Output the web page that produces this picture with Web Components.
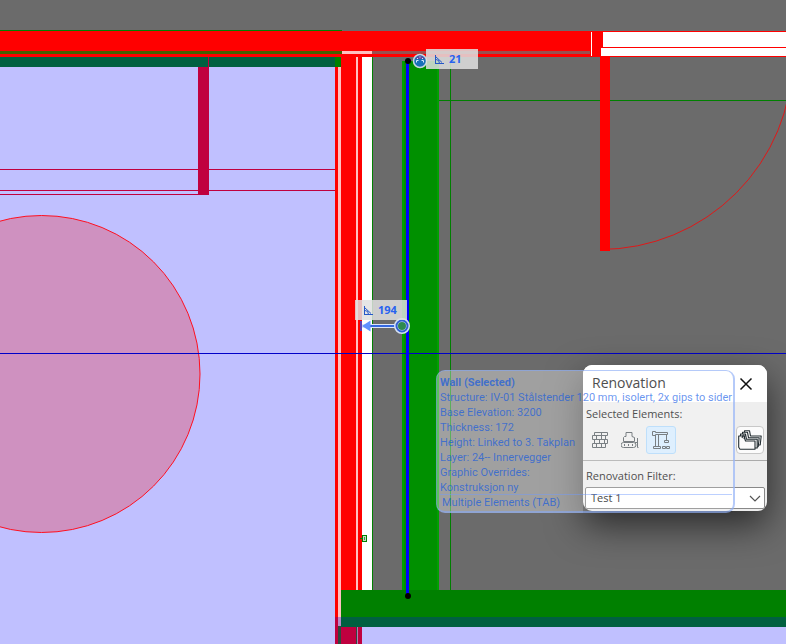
<!DOCTYPE html>
<html lang="en"><head><meta charset="utf-8"><title>Floor plan – Renovation</title>
<style>
html,body{margin:0;height:100%;overflow:hidden}
body{font-family:"Open Sans","Noto Sans",sans-serif;background:#6b6b6b}
</style></head><body>
<plan-workspace>
  <floor-plan slot="plan"></floor-plan>
  <dimension-tag style="left:426px;top:49px">21</dimension-tag>
  <dimension-tag style="left:355px;top:300px">194</dimension-tag>
  <renovation-palette style="left:583px;top:365px"></renovation-palette>
  <element-info style="left:436px;top:370px">
    <b slot="title">Wall (Selected)</b>
    <span>Structure: IV-01 Stålstender 120 mm, isolert, 2x gips to sider</span>
    <span>Base Elevation: 3200</span>
    <span>Thickness: 172</span>
    <span>Height: Linked to 3. Takplan</span>
    <span>Layer: 24-- Innervegger</span>
    <span>Graphic Overrides:</span>
    <span>Konstruksjon ny</span>
    <span slot="footer">Multiple Elements (TAB)</span>
  </element-info>
</plan-workspace>
<script>
const define = (name, html) => customElements.define(name, class extends HTMLElement {
  constructor() { super(); this.attachShadow({mode: 'open'}).innerHTML = html; }
});

define('plan-workspace', `<style>
:host{display:block;position:relative;width:100%;height:100vh;overflow:hidden}
</style><slot name="plan"></slot><slot></slot>`);

define('floor-plan', `<style>
:host{display:block;height:100%}
svg{display:block;width:100%;height:100%}
</style>
<svg viewBox="0 0 786 644" preserveAspectRatio="xMinYMin slice" role="img" aria-label="Floor plan" shape-rendering="crispEdges">
<rect width="786" height="644" fill="#6b6b6b"/>
<!-- rooms -->
<rect y="67" width="341" height="577" fill="#c0c0ff"/>
<rect x="361" y="626" width="425" height="18" fill="#c0c0ff"/>
<circle cx="41.500" cy="374" r="158.500" fill="#cf91c0" stroke="#ff1020" shape-rendering="auto"/>
<!-- furniture and partition -->
<path fill="#c0003f" d="M0 169h335v1H0zM0 190h335v1H0zM0 194h209v1H0zM198 67h11v127h-11z"/>
<!-- top wall -->
<path fill="#008000" d="M0 30h342v37H0z"/>
<path fill="#006040" d="M0 57h335v10H0z"/>
<path fill="#c0003f" d="M208 57h1v10h-1z"/>
<path fill="red" d="M0 31h786v26H0z"/>
<path fill="#446000" d="M0 51h342v3H0z"/>
<path fill="#ffc0c0" d="M342 51h30v3h-30z"/>
<path fill="#985050" d="M372 51h218v3H372z"/>
<path fill="#fff" d="M591 32h1v24h-1zM603 32h183v15H603zM601 48h185v8H601z"/>
<!-- left wall -->
<path fill="red" d="M335 67h3v577h-3zM341 57h21v533h-21z"/>
<path fill="#ffc0c0" d="M338 67h3v559h-3zM356 57h2v533h-2z"/>
<path fill="#fff" d="M362 54h10v536h-10z"/>
<path fill="red" d="M362 54h10v3h-10z"/>
<path fill="#008000" d="M372 57h1v533h-1zM450 57h1v533h-1zM439 100h347v1H439z"/>
<!-- selected wall -->
<path fill="#009000" d="M402 61h37v530h-37z"/>
<path fill="#00a000" d="M402 61h2v530h-2zM437 61h2v530h-2z"/>
<!-- bottom wall -->
<path fill="#008000" d="M341 590h445v27H341z"/>
<path fill="#006040" d="M341 617h445v10H341z"/>
<path fill="#c0003f" d="M335 617h3v27h-3zM341 627h15v17h-15zM358 627h4v17h-4z"/>
<path fill="#b888c8" d="M338 617h3v9h-3z"/>
<path fill="#304840" d="M338 626h3v18h-3zM356 627h1v17h-1z"/>
<path fill="#b080b0" d="M357 627h1v17h-1z"/>
<path stroke="#008000" fill="#c0e0c0" d="M362.500 535.500h4v6h-4zM360 538.500h2"/>
<path fill="#508050" d="M364 537h1v3h-1z"/>
<path d="M0 353h786v1H0z" fill="#0000c8"/>
<!-- door -->
<path fill="none" stroke="#e01818" d="M600 249.500A192.500 192.500 0 0 0 792.500 57" shape-rendering="auto"/>
<path fill="red" d="M600 57h10v194h-10zM601 56h185v1H601z"/>
<!-- selection line and snap marks -->
<path fill="#00f" d="M406 61h3v535h-3z"/>
<g shape-rendering="auto"><circle cx="408" cy="61" r="3"/><circle cx="408" cy="596" r="3"/>
<circle cx="420" cy="61" r="6.500" fill="#1870b8" stroke="#c8d8e0" stroke-width="1.500"/>
<path d="M415 59q5-7 10 0z" fill="#604da0"/><path d="M416.500 62.500v-2h2M423.500 62.500v-2h-2M417 58l1 1M423 58l-1 1M420 56.500v1" fill="none" stroke="#d8ecff"/>
<path d="M362 326h36" stroke="#dce6f8" stroke-width="4"/><path d="M368 326h29" stroke="#3468e0" stroke-width="2"/>
<path d="M370.500 320.500v11l-8.500-5.500z" fill="#5f92ff"/><path d="M360 321h2v10h-2z" fill="#6040b0"/>
<circle cx="402" cy="326" r="6" fill="#2f8a50" stroke="#d4e0f4" stroke-width="4"/><circle cx="402" cy="326" r="5.500" fill="none" stroke="#3060d0" stroke-width="2"/></g>
</svg>`);

define('dimension-tag', `<style>
:host{position:absolute;display:flex;align-items:center;gap:5px;box-sizing:border-box;height:20px;padding:0 8px;min-width:52px;background:#e1e1e1d9;color:#2862f0;font-size:11px;line-height:20px;font-weight:700}
svg{width:10px;height:10px}
</style><svg viewBox="0 0 10 10" fill="none" stroke="#2558c8" aria-hidden="true"><path d="M1.500 1v8.500M1 9.500h9M1.500 2.500l6.500 6M2 5.500q3.500 0 3.500 4"/></svg><slot></slot>`);

define('element-info', `<style>
:host{position:absolute;display:block;box-sizing:border-box;width:max-content;padding:4px 1px 1px 3px;border:1px solid #84a6f599;border-right-width:2px;border-bottom-width:2px;border-radius:9px;color:#0050e69c;font-family:Roboto,"Open Sans",sans-serif;font-size:11px;line-height:15px;background:linear-gradient(90deg,#ffffff5c 146px,#ffffff33 146px);white-space:nowrap}
::slotted(*){display:block}
footer{margin-top:-1px;padding:0 2px;border-top:1px solid #709aff77;line-height:15px}
</style><slot name="title"></slot><slot></slot><footer><slot name="footer"></slot></footer>`);

define('icon-button', `<style>
:host{display:block}
button{display:grid;place-items:center;width:28px;height:28px;padding:0;border:1px solid transparent;border-radius:3px;background:none;color:#586064}
:host([pressed]) button{background:#d6ecfe;border-color:#aed8fa;width:30px}
:host([framed]) button{background:#fbfbfb;border-color:#c8c8c8;border-radius:4px;color:#222c31}
:host([plain]) button{color:#111}
</style><button type="button"><slot></slot></button>`);

define('renovation-palette', `<style>
:host{position:absolute;display:block;width:184px;height:146px;border-radius:9px;overflow:hidden;background:#eee;color:#222;font-size:11px;line-height:16px;box-shadow:0 14px 36px #0009}
header{display:flex;justify-content:space-between;align-items:center;height:37px;padding:0 7px 0 9px;background:#fff}
h1{margin:0;font-size:14px;line-height:14px;font-weight:400;padding-bottom:2px}
.elements{padding:4px 3px 6px;border-bottom:1px solid #aaa}
.tools{display:flex;align-items:center;gap:2px;margin-top:4px}
.tools icon-button:last-child{margin-left:auto}
label{display:block;padding:7px 3px 3px}
.field{position:relative;display:flex;margin:0 2px}
select{appearance:none;width:100%;height:22px;padding:0 5px;border:1px solid #888;border-radius:2px;background:#fff;color:#111;font:inherit}
.field svg{position:absolute;right:4px;top:8px;pointer-events:none}
svg{display:block}
</style>
<header><h1>Renovation</h1><icon-button plain><svg width="14" height="14" viewBox="0 0 14 14" fill="none" stroke="currentColor" stroke-width="1.500" role="img" aria-label="Close"><path d="M1.500 1.500l11 11M12.500 1.500l-11 11"/></svg></icon-button></header>
<section class="elements"><div>Selected Elements:</div><div class="tools">
<icon-button><svg width="18" height="16" viewBox="0 0 18 16" fill="none" stroke="currentColor" role="img" aria-label="Existing"><path d="M3.500.5h13v3h-13zM1.500 3.500h13v4h-13zM3.500 7.500h13v4h-13zM1.500 11.500h13v4h-13zM10.500.5v3M5.500 3.500v4M10.500 3.500v4M8.500 7.500v4M13.500 7.500v4M5.500 11.500v4M10.500 11.500v4"/></svg></icon-button>
<icon-button><svg width="18" height="16" viewBox="0 0 18 16" fill="none" stroke="currentColor" role="img" aria-label="To be demolished"><path d="M2.500 9.500v-4l1-1h1.500V.5h6v4l2.500 1v4M2.500 9.500h11M16.500 6v9.500h1M14 10.500h2.500M2.500 10.500h10a2.300 2.300 0 0 1 0 5h-10a2.300 2.300 0 0 1 0-5z"/><path d="M3 13h1M7 13h1M11 13h1" stroke-width="2"/></svg></icon-button>
<icon-button pressed><svg width="18" height="18" viewBox="0 0 18 18" fill="none" stroke="currentColor" role="img" aria-label="New"><path d="M.5.5h3v1h12v2h-12v1h-3zM3.500 4v11M6.500 4v11M1.500 15.500h7v2h-7zM14.500 3.500v6M12.500 9.500h4v2h-4zM10.500 15.500h3v2h-3zM14.500 15.500h3v2h-3z"/></svg></icon-button>
<icon-button framed><svg width="24" height="20" viewBox="0 0 24 20" fill="#fbfbfb" stroke="currentColor" stroke-width="1.100" stroke-linejoin="round" role="img" aria-label="Renovation options"><path d="M6.500.7h5l1 5.300h10.700l-1 9h-15z"/><path d="M4.500 2.300h5l1 5.400h10.700l-1 9h-15z"/><path d="M2.500 4h5l1 5.300h10.700v8.700h-16z"/><path d="M.7 6h5.300l1.500 5h9.500v8.300h-15l-1.300-2z"/><path d="M4 8l1.500-3.500M6 9l1.500-5" fill="none"/></svg></icon-button>
</div></section>
<label for="filter">Renovation Filter:</label>
<div class="field"><select id="filter"><option>Test 1</option></select><svg width="12" height="7" viewBox="0 0 12 7" fill="none" stroke="#555" stroke-width="1.200" aria-hidden="true"><path d="M1 1l5 5 5-5"/></svg></div>`);
</script></body></html>
